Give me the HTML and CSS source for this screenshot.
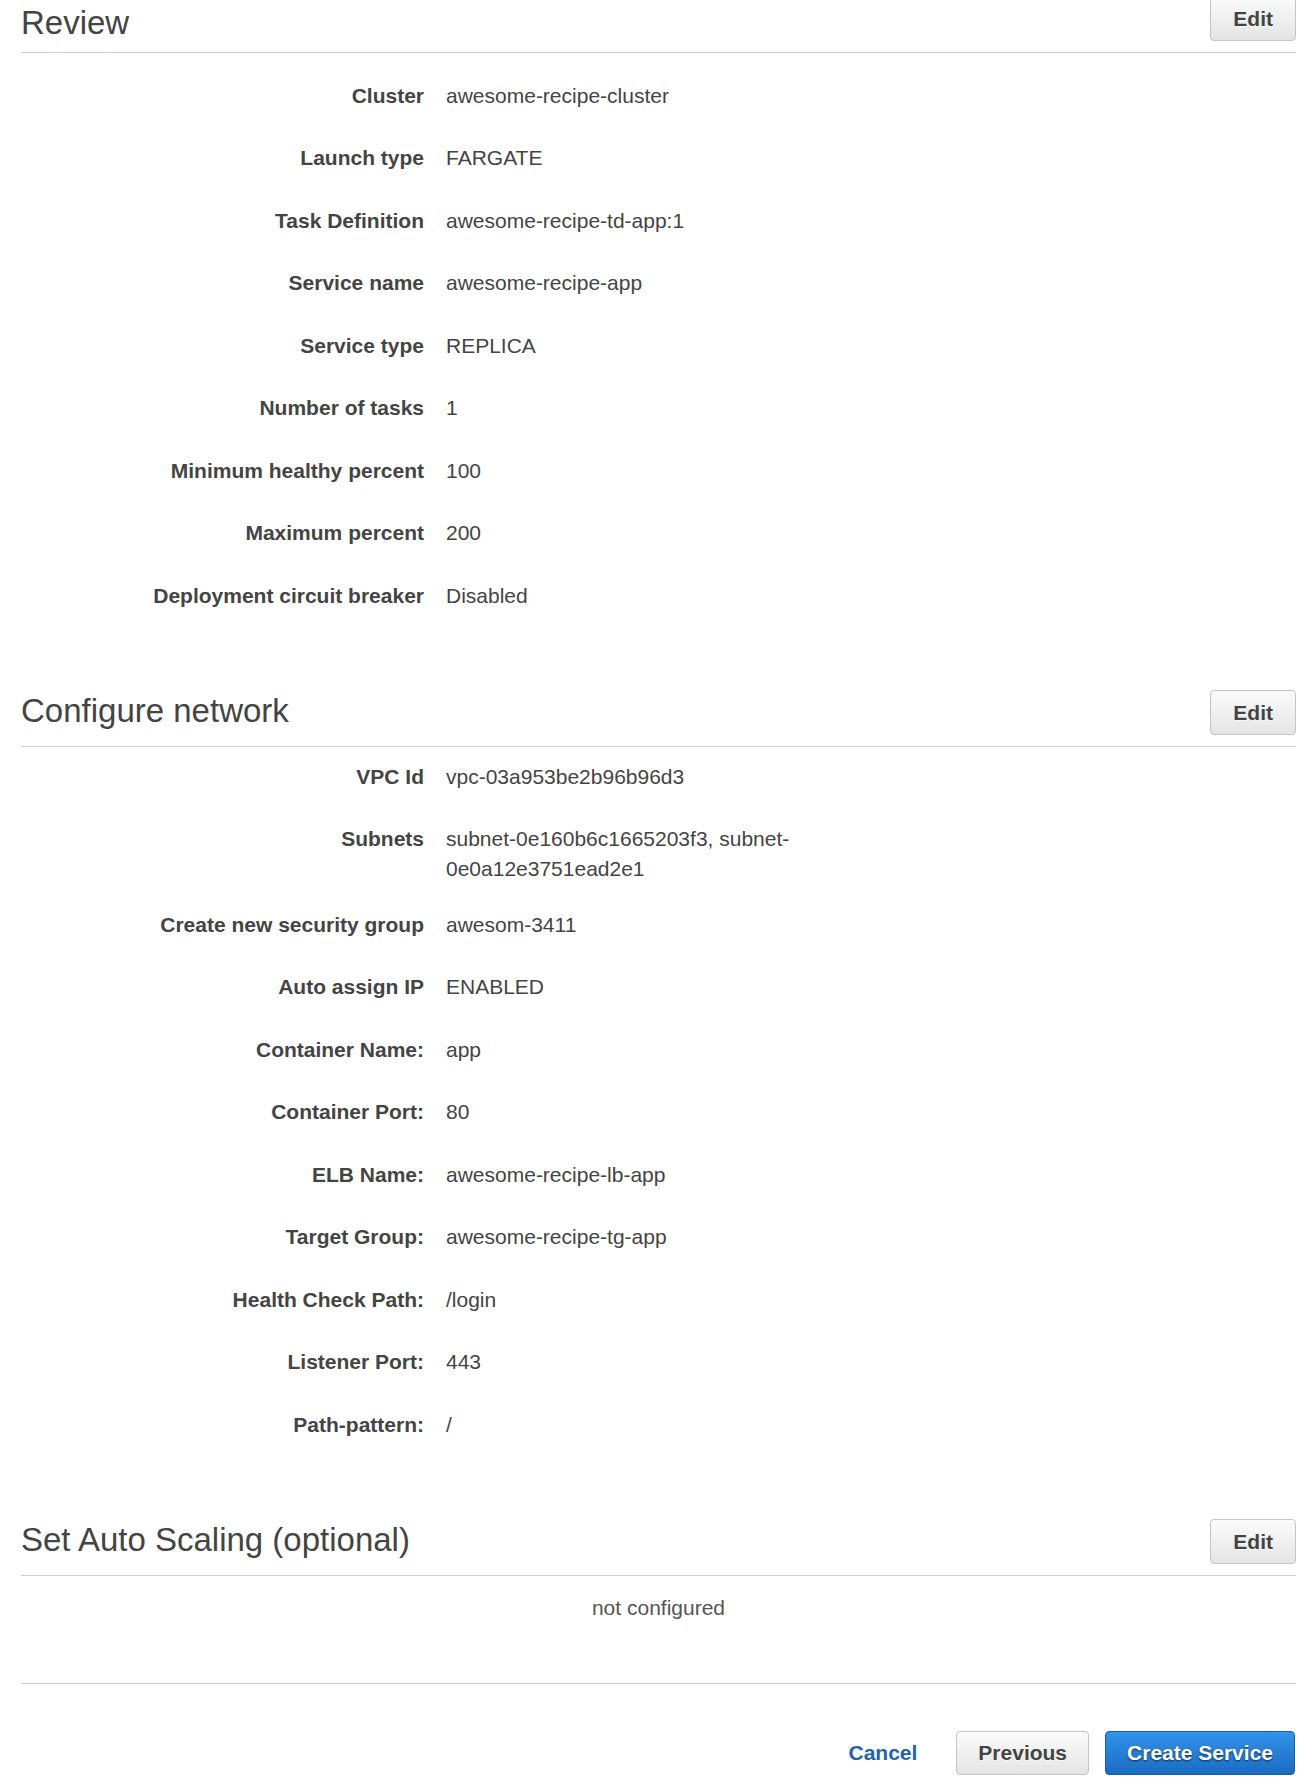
FILE: index.html
```html
<!DOCTYPE html>
<html lang="en">
<head>
<meta charset="utf-8">
<title>Review</title>
<link rel="stylesheet" href="styles.css">
</head>
<body>
<div class="page">

  <section class="section section-first">
    <div class="section-header header-first">
      <h2 class="section-title title-first">Review</h2>
      <button class="btn">Edit</button>
    </div>
    <div class="rows rows-first">
      <div class="row"><div class="label">Cluster</div><div class="value">awesome-recipe-cluster</div></div>
      <div class="row"><div class="label">Launch type</div><div class="value">FARGATE</div></div>
      <div class="row"><div class="label">Task Definition</div><div class="value">awesome-recipe-td-app:1</div></div>
      <div class="row"><div class="label">Service name</div><div class="value">awesome-recipe-app</div></div>
      <div class="row"><div class="label">Service type</div><div class="value">REPLICA</div></div>
      <div class="row"><div class="label">Number of tasks</div><div class="value">1</div></div>
      <div class="row"><div class="label">Minimum healthy percent</div><div class="value">100</div></div>
      <div class="row"><div class="label">Maximum percent</div><div class="value">200</div></div>
      <div class="row"><div class="label">Deployment circuit breaker</div><div class="value">Disabled</div></div>
    </div>
  </section>

  <section class="section">
    <div class="section-header">
      <h2 class="section-title">Configure network</h2>
      <button class="btn">Edit</button>
    </div>
    <div class="rows">
      <div class="row"><div class="label">VPC Id</div><div class="value">vpc-03a953be2b96b96d3</div></div>
      <div class="row"><div class="label">Subnets</div><div class="value">subnet-0e160b6c1665203f3, subnet-0e0a12e3751ead2e1</div></div>
      <div class="row"><div class="label">Create new security group</div><div class="value">awesom-3411</div></div>
      <div class="row"><div class="label">Auto assign IP</div><div class="value">ENABLED</div></div>
      <div class="row"><div class="label">Container Name:</div><div class="value">app</div></div>
      <div class="row"><div class="label">Container Port:</div><div class="value">80</div></div>
      <div class="row"><div class="label">ELB Name:</div><div class="value">awesome-recipe-lb-app</div></div>
      <div class="row"><div class="label">Target Group:</div><div class="value">awesome-recipe-tg-app</div></div>
      <div class="row"><div class="label">Health Check Path:</div><div class="value">/login</div></div>
      <div class="row"><div class="label">Listener Port:</div><div class="value">443</div></div>
      <div class="row"><div class="label">Path-pattern:</div><div class="value">/</div></div>
    </div>
  </section>

  <section class="section">
    <div class="section-header">
      <h2 class="section-title">Set Auto Scaling (optional)</h2>
      <button class="btn">Edit</button>
    </div>
    <div class="empty-note">not configured</div>
  </section>

  <div class="footer">
    <a class="link-cancel" href="#">Cancel</a>
    <button class="btn btn-footer">Previous</button>
    <button class="btn btn-footer btn-primary">Create Service</button>
  </div>

</div>
</body>
</html>
```

FILE: styles.css
```css
html, body {
  margin: 0;
  padding: 0;
  background: #ffffff;
}

body {
  font-family: "Liberation Sans", Arial, Helvetica, sans-serif;
  color: #444444;
  font-size: 21px;
}

.page {
  padding: 0 10px 0 21px;
  overflow: hidden;
  height: 1785px;
  box-sizing: border-box;
}

.section + .section {
  margin-top: 61.5px;
}

.section-header {
  display: flex;
  justify-content: space-between;
  align-items: flex-end;
  border-bottom: 1px solid #cfcfcf;
  padding-bottom: 11px;
}

.header-first {
  margin-top: -4px;
}

.section-title {
  margin: 0 0 8px 0;
  font-size: 33px;
  line-height: 33px;
  font-weight: normal;
  color: #444444;
}

.title-first {
  margin-bottom: 2px;
}

.btn {
  font-family: "Liberation Sans", Arial, Helvetica, sans-serif;
  font-size: 21px;
  font-weight: bold;
  color: #444444;
  height: 45px;
  line-height: 43px;
  padding: 0 21px;
  border: 1px solid #c4c4c4;
  border-radius: 4px;
  background: linear-gradient(to bottom, #fbfbfb 0%, #e4e4e4 100%);
  text-shadow: 0 1px 0 rgba(255, 255, 255, 0.8);
  box-sizing: border-box;
  cursor: pointer;
  margin: 0;
}

.section-header .btn {
  padding: 0 22px;
}

.btn-footer {
  height: 44px;
  line-height: 42px;
}

.btn-primary {
  color: #ffffff;
  border-color: #1a5ea9;
  background: linear-gradient(to bottom, #3193ea 0%, #1b6bc2 100%);
  text-shadow: 0 1px 2px rgba(0, 0, 0, 0.65);
}

.rows {
  padding-top: 0;
}

.rows-first {
  padding-top: 13px;
}

.row {
  display: flex;
  align-items: flex-start;
  padding: 14.5px 0 11px 0;
  min-height: 37px;
}

.label {
  width: 403px;
  flex: 0 0 403px;
  text-align: right;
  font-weight: bold;
  line-height: 30px;
  color: #444444;
}

.value {
  margin-left: 22px;
  width: 425px;
  line-height: 30px;
  color: #444444;
}

.empty-note {
  text-align: center;
  line-height: 30px;
  padding: 17px 0 60px 0;
  color: #555555;
  border-bottom: 1px solid #cfcfcf;
}

.footer {
  display: flex;
  justify-content: flex-end;
  align-items: center;
  padding: 47px 1px 0 0;
}

.link-cancel {
  font-weight: bold;
  font-size: 21px;
  color: #1e62b7;
  text-decoration: none;
  margin-right: 39px;
}

.footer .btn + .btn {
  margin-left: 16px;
}
```
